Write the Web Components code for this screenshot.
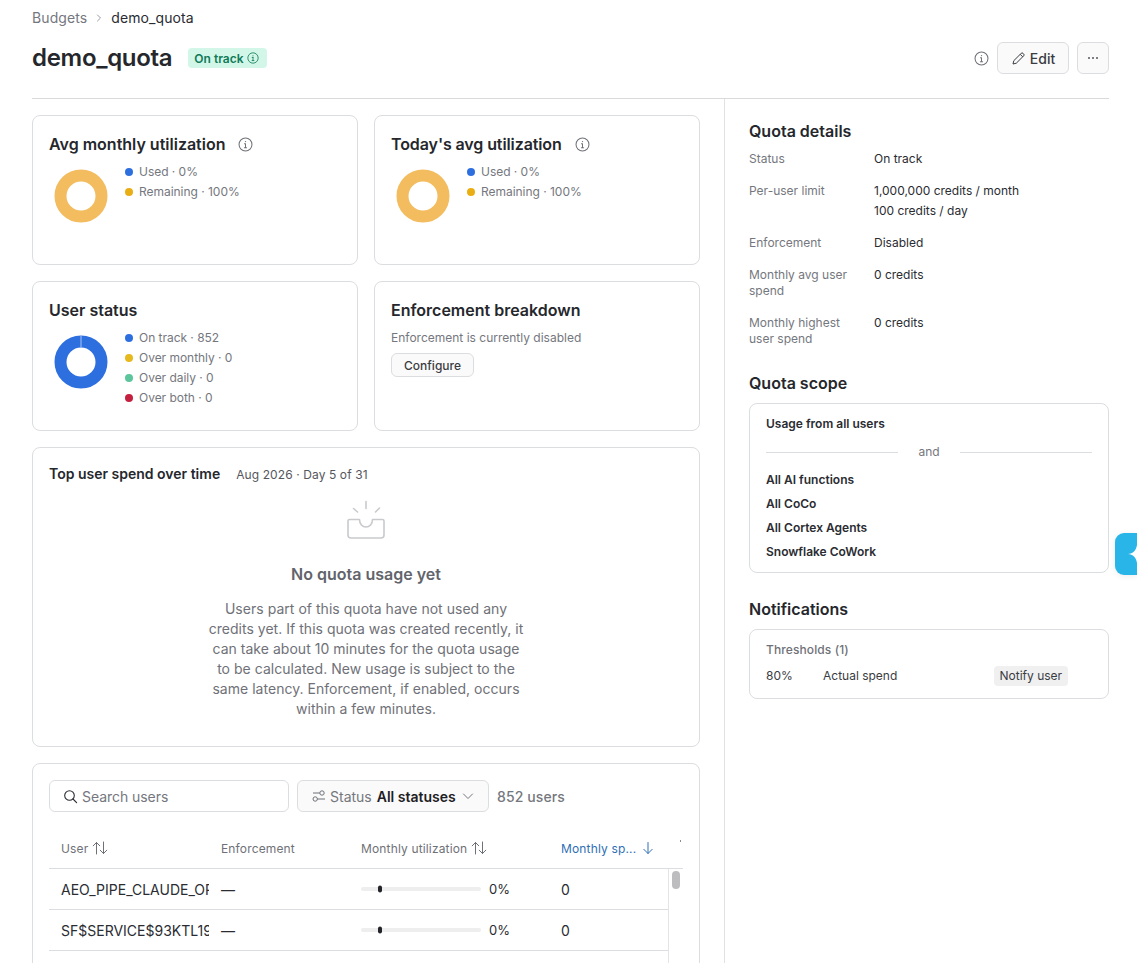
<!DOCTYPE html>
<html lang="en"><head><meta charset="utf-8"><title>demo_quota</title>
<style>
html,body{margin:0;padding:0;background:#fff}
body{font-family:Inter,"Liberation Sans",sans-serif;color:#1e2025}
</style></head><body>
<budget-page></budget-page>
<script>
const INFO=(s=14,c='#6f7178')=>`<svg width="${s}" height="${s}" viewBox="0 0 16 16" fill="none" stroke="${c}" stroke-width="1.1" style="display:block"><circle cx="8" cy="8" r="6.9"/><path d="M8 7.2v4.2M6.8 11.4h2.4M6.9 7.2H8" stroke-linecap="round"/><circle cx="8" cy="4.9" r=".7" fill="${c}" stroke="none"/></svg>`;
const SORT=(c='#6f7178')=>`<svg width="16" height="14" viewBox="0 0 16 14" fill="none" stroke="${c}" stroke-width="1" stroke-linecap="round" stroke-linejoin="round" style="display:block"><path d="M4.5 13V1.5M1.2 4.8 4.5 1.5 7.8 4.8M11.5 1v11.5M8.2 9.2l3.3 3.3 3.3-3.3"/></svg>`;
function def(name,html,setup){
  customElements.define(name,class extends HTMLElement{
    connectedCallback(){
      if(this.shadowRoot)return;
      const r=this.attachShadow({mode:'open'});
      r.innerHTML=typeof html==='function'?html(this):html;
      if(setup)setup(this,r);
    }
  });
}
def('info-icon',h=>`<style>:host{display:inline-flex;flex:none}</style>${INFO(+h.getAttribute('size')||14,h.getAttribute('color')||'#6f7178')}`);
def('surface-card',`<style>:host{display:block;box-sizing:border-box;border:1px solid #dcdde0;border-radius:8px;padding:16px;background:#fff;min-width:0;overflow:hidden}</style><slot></slot>`);
def('card-title',h=>`<style>:host{display:flex;align-items:center;gap:13px;font-size:16px;line-height:24px;font-weight:600;color:#25272c}</style><slot></slot>`);
def('donut-chart',h=>{
  const blue=h.hasAttribute('blue');const col=blue?'#2e6fe0':'#f2bc5f';
  return `<style>:host{display:block;flex:none;width:64px;height:64px;margin-top:2px}svg{display:block}</style>
  <svg width="64" height="64" viewBox="0 0 64 64"><circle cx="32" cy="32" r="20.5" fill="none" stroke="${col}" stroke-width="12"/>${blue?'<path d="M32 5.5v11.8" stroke="#a9c4f2" stroke-width="1"/>':''}</svg>`;
});
def('legend-item',h=>`<style>:host{display:flex;align-items:center;gap:6px;font-size:12px;line-height:20px;color:#75777e;white-space:nowrap;letter-spacing:-.03px}i{width:8px;height:8px;border-radius:50%;background:${h.getAttribute('color')};flex:none}</style><i></i><slot></slot>`);
def('chart-row',`<style>:host{display:flex;gap:12px;margin-top:6px}div{display:flex;flex-direction:column}</style><slot name="chart"></slot><div><slot></slot></div>`);
def('outline-button',h=>`<style>:host{display:inline-flex;align-items:center;justify-content:center;box-sizing:border-box;border:1px solid #dcdde0;border-radius:6px;background:#fafafa;color:#3a3c42;white-space:nowrap}</style><slot></slot>`);
def('detail-row',h=>`<style>:host{display:grid;grid-template-columns:125px 1fr;font-size:12px}
.l{color:#75777e;line-height:16px;padding:2px 15px 2px 0}.v{line-height:20px;color:#2a2c32}</style><div class="l">${h.getAttribute('label')}</div><div class="v"><slot></slot></div>`);
def('section-title',`<style>:host{display:block;font-size:16px;line-height:24px;font-weight:600;color:#25272c}</style><slot></slot>`);
def('scope-line',`<style>:host{display:block;font-size:12px;line-height:20px;font-weight:600;color:#2a2c32}</style><slot></slot>`);
def('and-divider',`<style>:host{display:grid;grid-template-columns:1fr 62px 1fr;align-items:center;font-size:12px;line-height:20px;color:#75777e;text-align:center;margin:8px 0}hr{border:0;border-top:1px solid #dcdde0;margin:0;width:100%}</style><hr><span>and</span><hr>`);
def('meter-bar',`<style>:host{display:block;width:120px;height:4px;border-radius:2px;background:#eeeeef;flex:none}
i{display:block;width:4px;height:7px;transform:translateY(-1.5px);margin-left:17px;background:#222429;border-radius:2px}</style><i></i>`);
def('table-row',h=>`<style>:host{display:grid;grid-template-columns:160px 140px 200px 1fr;height:41px;box-sizing:border-box;border-bottom:1px solid #dcdde0;font-size:14px;color:#2a2c32;align-items:center}
div{padding-left:12px;min-width:0}.u{overflow:hidden;white-space:nowrap}.m{display:flex;align-items:center;gap:8px}.m span{font-size:13px}</style>
<div class="u">${h.getAttribute('user')}</div><div>—</div><div class="m"><meter-bar></meter-bar><span>0%</span></div><div>0</div>`);
def('users-table',`<style>:host{display:block;margin-top:16px}
.head{display:grid;grid-template-columns:160px 140px 200px 1fr;height:40px;border-bottom:1px solid #dcdde0;font-size:12px;color:#6f7178;align-items:center;position:relative}
.head div{padding-left:12px;display:flex;align-items:center;gap:4px;letter-spacing:.15px}
.act{color:#2f6fb5}.act svg{margin-left:1px}
.tick{position:absolute;right:2px;top:12px;width:1px;height:2px;background:#8a8c92}
.body{display:flex}.rows{flex:1;min-width:0}
.track{width:14px;border-left:1px solid #e4e4e6;flex:none;display:flex;justify-content:center;padding-top:2px;height:120px}
.thumb{width:8px;height:18px;border-radius:4px;background:#bdbdbf}</style>
<div class="head"><div>User ${SORT()}</div><div>Enforcement</div><div>Monthly utilization ${SORT()}</div><div class="act">Monthly sp... <svg width="14" height="14" viewBox="0 0 14 14" fill="none" stroke="#2f6fb5" stroke-width="1" stroke-linecap="round" stroke-linejoin="round"><path d="M7 1.5V12.5M2.8 8.3 7 12.5 11.2 8.3"/></svg></div><span class="tick"></span></div>
<div class="body"><div class="rows"><table-row user="AEO_PIPE_CLAUDE_OPS"></table-row><table-row user="SF$SERVICE$93KTL19X"></table-row></div><div class="track"><div class="thumb"></div></div></div>`);
def('table-toolbar',`<style>:host{display:flex;align-items:center;gap:8px;height:32px}
.search{box-sizing:border-box;width:240px;height:32px;border:1px solid #dcdde0;border-radius:6px;display:flex;align-items:center;gap:4px;padding-left:13px;font-size:14px;color:#75777e;letter-spacing:-.05px}
.filter{box-sizing:border-box;width:192px;height:32px;border:1px solid #dcdde0;border-radius:6px;background:#fafafa;display:flex;align-items:center;padding-left:14px;font-size:14px;color:#75777e;white-space:nowrap}
.filter b{color:#1e2025;font-weight:600;margin-left:5px}.filter svg.f{margin-right:4px}.filter svg.c{margin-left:6px}
.count{font-size:14px;font-weight:500;color:#75777e;letter-spacing:.1px}</style>
<div class="search"><svg width="15" height="15" viewBox="0 0 15 15" fill="none" stroke="#2a2c32" stroke-width="1.1" stroke-linecap="round"><circle cx="6.5" cy="6.5" r="4.8"/><path d="M10 10l3.6 3.6"/></svg>Search users</div>
<div class="filter"><svg class="f" width="14" height="14" viewBox="0 0 14 14" fill="none" stroke="#6f7178" stroke-width="1"><circle cx="10" cy="4" r="2.2"/><path d="M1 4h6.800"/><circle cx="3.200" cy="10" r="2.200"/><path d="M5.400 10H13"/></svg>Status <b>All statuses</b><svg class="c" width="12" height="12" viewBox="0 0 12 12" fill="none" stroke="#75777e" stroke-width="1" stroke-linecap="round" stroke-linejoin="round"><path d="M1.5 4 6 8.5 10.500 4"/></svg></div>
<div class="count">852 users</div>`);
def('empty-state',`<style>:host{display:flex;flex-direction:column;align-items:center;text-align:center}
svg{display:block;margin-top:15px}
h3{margin:22px 0 0;font-size:16px;line-height:24px;font-weight:600;color:#62646b;}
p{margin:13px 0 0;font-size:14px;line-height:20px;color:#6f7178;letter-spacing:.03px;white-space:nowrap}</style>
<svg width="40" height="40" viewBox="0 0 40 40" fill="none" stroke="#c9cacd" stroke-width="1.6" stroke-linecap="round" stroke-linejoin="round"><path d="M20 1.500v7M7.500 8.500l4 3.500M33.500 8l-4 4"/><path d="M13.500 19.500H3.500a1.500 1.500 0 0 0-1.500 1.500V35a3 3 0 0 0 3 3h30a3 3 0 0 0 3-3V21a1.500 1.500 0 0 0-1.500-1.500H26.500c0 4.500-3 7.500-6.500 7.500s-6.500-3-6.500-7.500"/></svg>
<h3>No quota usage yet</h3>
<p>Users part of this quota have not used any<br>credits yet. If this quota was created recently, it<br>can take about 10 minutes for the quota usage<br>to be calculated. New usage is subject to the<br>same latency. Enforcement, if enabled, occurs<br>within a few minutes.</p>`);
def('page-header',`<style>:host{display:block;border-bottom:1px solid #d9dadc;padding:8px 0 24px}
.crumb{display:flex;align-items:center;gap:8px;font-size:14px;line-height:20px;color:#75777e;letter-spacing:.1px}.crumb b{font-weight:400;color:#2a2c32}
.row{display:flex;align-items:center;margin-top:14px;height:32px}
h1{margin:0;font-size:24px;line-height:32px;font-weight:600;color:#25272c;letter-spacing:-.3px}
.badge{display:flex;align-items:center;gap:3px;margin-left:16px;height:20px;padding:0 8px 0 6px;border-radius:4px;background:#d2f7e8;color:#117a58;font-size:12px;font-weight:600}
.sp{flex:1}.edit{width:72px;height:32px;font-size:14px;font-weight:500;margin-left:8px}.more{width:32px;height:32px;margin-left:8px}</style>
<div class="crumb">Budgets <svg width="8" height="8" viewBox="0 0 8 8" fill="none" stroke="#9a9ca2" stroke-width="1" stroke-linecap="round" stroke-linejoin="round"><path d="M2.500 1 5.500 4 2.500 7"/></svg><b>demo_quota</b></div>
<div class="row"><h1>demo_quota</h1><span class="badge">On track <info-icon size="12" color="#117a58"></info-icon></span><span class="sp"></span><info-icon size="15"></info-icon>
<outline-button class="edit"><svg width="15" height="15" viewBox="0 0 15 15" fill="none" stroke="#3a3c42" stroke-width="1" stroke-linejoin="round" style="margin-right:4px"><path d="M2 13l.8-3.300 7.400-7.400a1.300 1.300 0 0 1 1.800 0l.7.700a1.300 1.300 0 0 1 0 1.800L5.300 12.200z"/><path d="M9.200 3.300l2.500 2.500"/></svg>Edit</outline-button>
<outline-button class="more"><svg width="14" height="14" viewBox="0 0 14 14" fill="#55575d"><circle cx="3" cy="7" r="1"/><circle cx="7" cy="7" r="1"/><circle cx="11" cy="7" r="1"/></svg></outline-button></div>`);
def('left-pane',`<style>:host{display:grid;grid-template-columns:326px 326px;grid-template-rows:150px 150px 300px 300px;gap:16px;width:668px;padding:16px 24px 0 0;box-sizing:content-box}
.wide{grid-column:1/3}.h{display:flex;align-items:baseline;gap:16px;font-size:14px;line-height:20px;font-weight:600;color:#25272c}.h span{font-size:12px;font-weight:400;color:#55575d;letter-spacing:.1px}
.sub{font-size:12px;line-height:20px;color:#75777e;margin-top:6px}
.cfg{height:24px;width:83px;font-size:12px;font-weight:500;margin-top:5px}</style>
<surface-card><card-title>Avg monthly utilization <info-icon size="15"></info-icon></card-title><chart-row><donut-chart slot="chart"></donut-chart><legend-item color="#2e6fe0">Used · 0%</legend-item><legend-item color="#e9ae14">Remaining · 100%</legend-item></chart-row></surface-card>
<surface-card><card-title style="letter-spacing:-.1px">Today's avg utilization <info-icon size="15"></info-icon></card-title><chart-row><donut-chart slot="chart"></donut-chart><legend-item color="#2e6fe0">Used · 0%</legend-item><legend-item color="#e9ae14">Remaining · 100%</legend-item></chart-row></surface-card>
<surface-card><card-title>User status</card-title><chart-row><donut-chart slot="chart" blue></donut-chart><legend-item color="#2e6fe0">On track · 852</legend-item><legend-item color="#e6b91e">Over monthly · 0</legend-item><legend-item color="#5cc59c">Over daily · 0</legend-item><legend-item color="#c4203f">Over both · 0</legend-item></chart-row></surface-card>
<surface-card><card-title>Enforcement breakdown</card-title><div class="sub">Enforcement is currently disabled</div><outline-button class="cfg">Configure</outline-button></surface-card>
<surface-card class="wide"><div class="h">Top user spend over time <span>Aug 2026 · Day 5 of 31</span></div><empty-state></empty-state></surface-card>
<surface-card class="wide"><table-toolbar></table-toolbar><users-table></users-table></surface-card>`);
def('right-pane',`<style>:host{display:block;border-left:1px solid #e0e1e3;padding:20px 0 0 24px;box-sizing:border-box;min-width:0}
.rows{display:flex;flex-direction:column;gap:12px;margin-top:6px}
.scope{margin-top:22px}.notif{margin-top:24px}.box{display:block;margin-top:8px;border:1px solid #dcdde0;border-radius:8px;padding:10px 16px}
.th{font-size:12px;line-height:20px;font-weight:500;color:#6f7178;letter-spacing:.1px}
.t{display:grid;grid-template-columns:57px 171px auto;align-items:center;font-size:12px;line-height:20px;color:#3a3c42;margin:7px 0 2px}
.tag{background:#f0f0f1;border-radius:4px;padding:0 5.500px;justify-self:start;color:#3a3c42}
.items{display:flex;flex-direction:column;gap:4px}</style>
<section-title>Quota details</section-title>
<div class="rows"><detail-row label="Status">On track</detail-row><detail-row label="Per-user limit">1,000,000 credits / month<br>100 credits / day</detail-row><detail-row label="Enforcement">Disabled</detail-row><detail-row label="Monthly avg user spend">0 credits</detail-row><detail-row label="Monthly highest user spend">0 credits</detail-row></div>
<section-title class="scope">Quota scope</section-title>
<div class="box"><scope-line>Usage from all users</scope-line><and-divider></and-divider><div class="items"><scope-line>All AI functions</scope-line><scope-line>All CoCo</scope-line><scope-line>All Cortex Agents</scope-line><scope-line>Snowflake CoWork</scope-line></div></div>
<section-title class="notif">Notifications</section-title>
<div class="box"><div class="th">Thresholds (1)</div><div class="t" style="margin-top:6px"><span>80%</span><span>Actual spend</span><span class="tag">Notify user</span></div></div>`);
def('assist-fab',`<style>:host{position:absolute;left:1115px;top:533px;width:22px;height:42px;background:#29b5e8;border-radius:9px 0 0 9px;overflow:hidden;box-shadow:0 1px 6px rgba(0,0,0,.08)}svg{display:block}</style>
<svg width="22" height="42" viewBox="0 0 22 42"><path d="M13 21c5-.5 8-3 9-9v18c-1-6-4-8.500-9-9z" fill="#fff"/></svg>`);
def('budget-page',`<style>:host{display:block;position:relative;width:1137px;height:963px;overflow:hidden;box-sizing:border-box;padding:0 28px 0 32px}
main{display:grid;grid-template-columns:692px 1fr;height:900px}</style>
<page-header></page-header><main><left-pane></left-pane><right-pane></right-pane></main><assist-fab></assist-fab>`);
</script>
</body></html>
